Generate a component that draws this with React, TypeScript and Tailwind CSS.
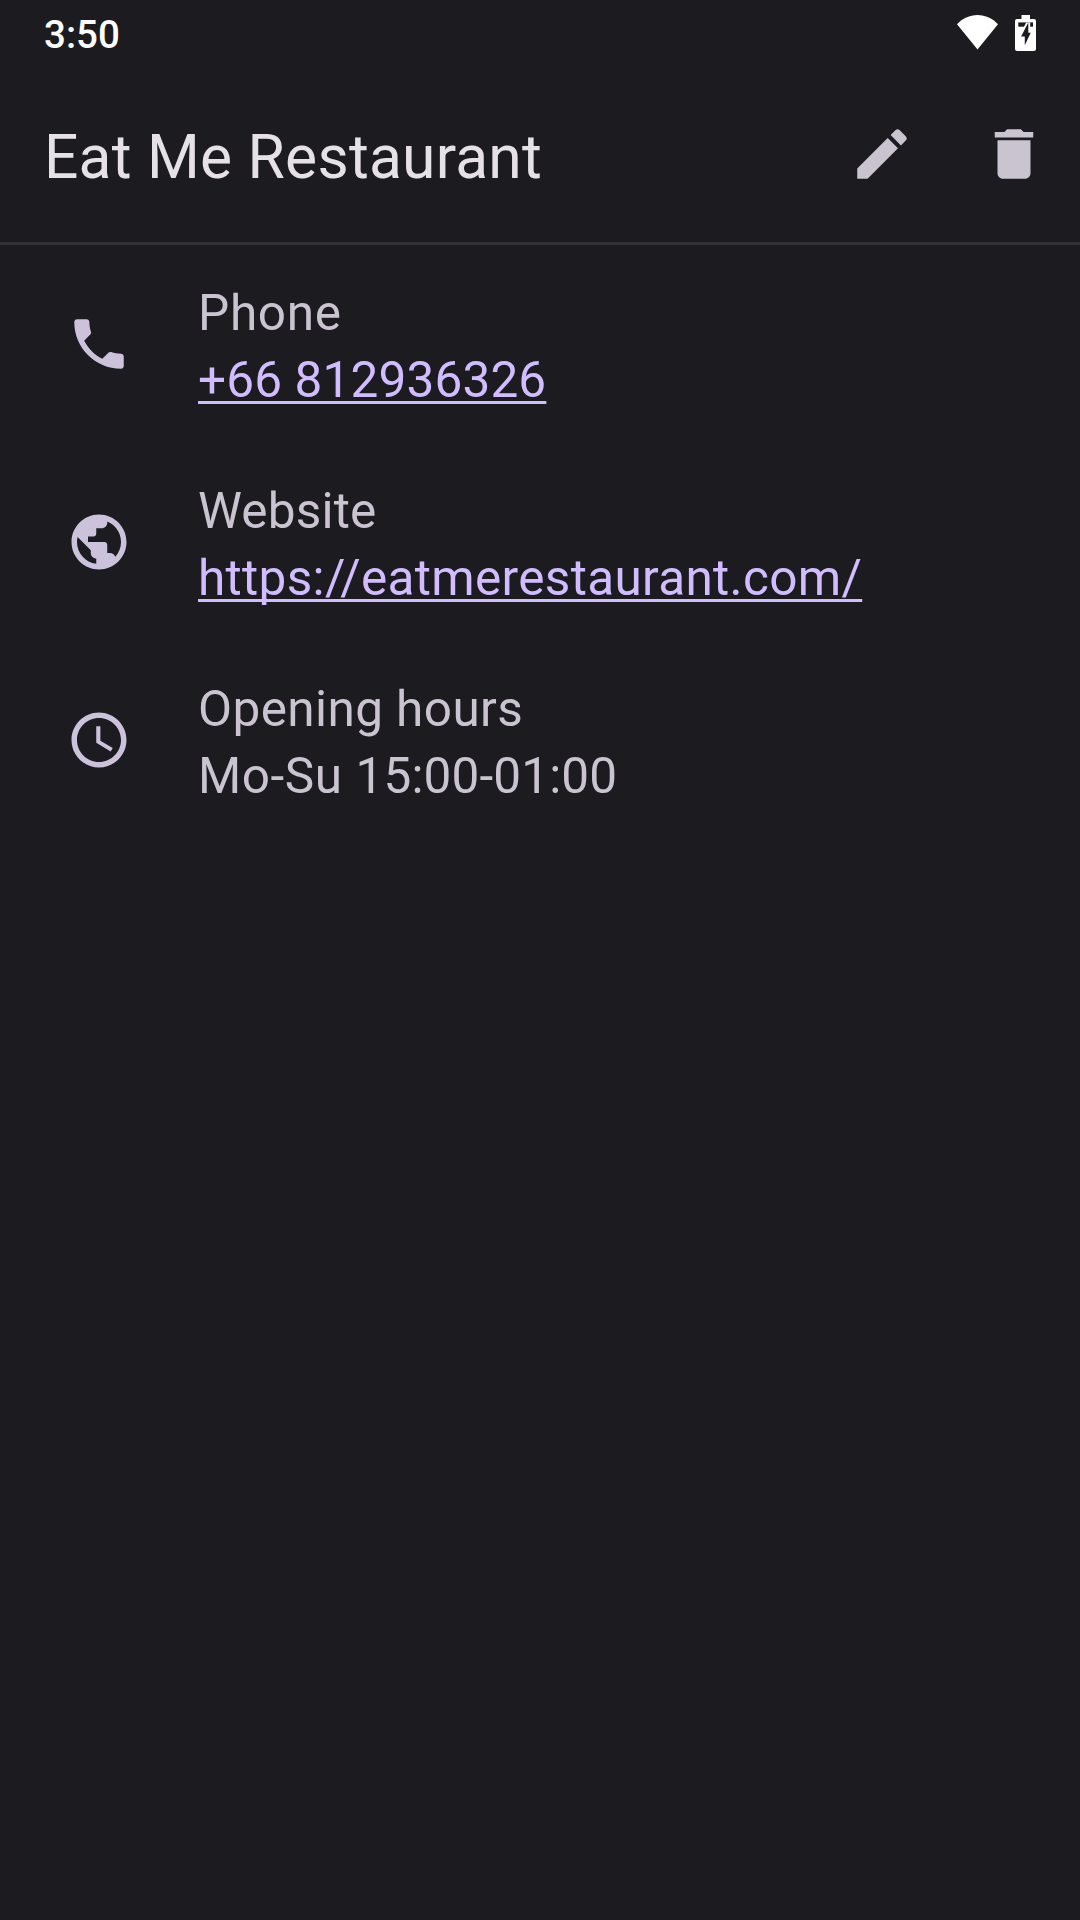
import type { ReactNode } from "react";

const PATHS = {
  edit: "M3 17.25V21h3.75L17.81 9.94l-3.75-3.75L3 17.25zM20.71 7.04c.39-.39.39-1.02 0-1.41l-2.34-2.34c-.39-.39-1.02-.39-1.41 0l-1.83 1.83 3.75 3.75 1.83-1.83z",
  trash: "M6 19c0 1.100.9 2 2 2h8c1.100 0 2-.9 2-2V7H6v12zM19 4h-3.500l-1-1h-5l-1 1H5v2h14V4z",
  phone: "M6.620 10.790c1.440 2.830 3.760 5.140 6.590 6.590l2.200-2.200c.27-.27.67-.36 1.020-.24 1.120.37 2.330.57 3.570.57.55 0 1 .45 1 1V20c0 .55-.45 1-1 1-9.390 0-17-7.610-17-17 0-.55.45-1 1-1h3.500c.55 0 1 .45 1 1 0 1.250.2 2.450.57 3.570.11.35.03.74-.25 1.020l-2.200 2.200z",
  globe: "M12 2C6.480 2 2 6.480 2 12s4.480 10 10 10 10-4.480 10-10S17.520 2 12 2zm-1 17.930c-3.950-.49-7-3.850-7-7.930 0-.62.08-1.210.21-1.790L9 15v1c0 1.100.9 2 2 2v1.930zm6.900-2.540c-.26-.81-1-1.390-1.900-1.390h-1v-3c0-.55-.45-1-1-1H8v-2h2c.55 0 1-.45 1-1V7h2c1.100 0 2-.9 2-2v-.41c2.930 1.190 5 4.060 5 7.410 0 2.080-.8 3.970-2.100 5.390z",
  clock: "M11.990 2C6.470 2 2 6.480 2 12s4.470 10 9.990 10C17.520 22 22 17.520 22 12S17.520 2 11.990 2zM12 20c-4.420 0-8-3.580-8-8s3.580-8 8-8 8 3.580 8 8-3.580 8-8 8zm.5-13H11v6l5.250 3.150.75-1.230-4.500-2.670z",
};

function Icon({ name }: { name: keyof typeof PATHS }) {
  return (
    <svg viewBox="0 0 24 24" className="size-[66px] shrink-0" fill="currentColor">
      <path d={PATHS[name]} />
    </svg>
  );
}

function Row({ icon, children }: { icon: keyof typeof PATHS; children: ReactNode }) {
  return (
    <li className="flex h-[198px] items-center gap-[66px] pl-[66px] text-[#ccc2dc]">
      <Icon name={icon} />
      <div className="pt-[5px] text-[49.5px] leading-[67px] whitespace-nowrap text-[#cac4d0]">{children}</div>
    </li>
  );
}

const linkClass =
  "text-[#d0bcff] underline decoration-[3px] underline-offset-[4px] [text-decoration-skip-ink:none]";

export default function App() {
  return (
    <main className="h-[1920px] w-[1080px] overflow-hidden bg-[#1c1b1f] font-[Roboto,sans-serif]">
      <div className="flex h-[66px] items-start justify-between pr-[44px] pl-[44px] text-white">
        <span className="pt-[12px] text-[38.5px] leading-[46px] font-medium">3:50</span>
        <div className="flex items-start gap-[17px] pt-[15px]">
          <svg viewBox="0 0 41 35" className="h-[35px] w-[41px]" fill="currentColor">
            <path d="M0 9.200C5.500 3.500 12.500 0 20.500 0S35.500 3.500 41 9.200L20.500 34.600z" />
          </svg>
          <svg viewBox="0 0 21 36" className="h-[36px] w-[21px]" fill="currentColor">
            <path d="M6.500 0h8.500v4h4q2 0 2 2v28q0 2-2 2H2q-2 0-2-2V6q0-2 2-2h4.500z" />
            <path d="M3.300 7.400h14.700v4.300H3.300z" fill="#1c1b1f" />
            <path d="M11.200 7.400L8.900 12h6.300V7.400z" />
            <path d="M13.300 7.400L6.100 21.600h3.700v8.700L15.700 17.800h-2.400z" fill="#1c1b1f" />
          </svg>
        </div>
      </div>
      <header className="flex h-[179px] items-start border-b-[3px] border-[#323136] pt-[55px] pr-[33px] pl-[44px] text-[#cac4d0]">
        <h1 className="flex-1 pt-px text-[60.5px] leading-[72px] tracking-[0.23px] whitespace-nowrap text-[#e6e1e5]">
          Eat Me Restaurant
        </h1>
        <div className="flex gap-[66px]">
          <button aria-label="Edit"><Icon name="edit" /></button>
          <button aria-label="Delete"><Icon name="trash" /></button>
        </div>
      </header>
      <ul>
        <Row icon="phone">
          <p className="tracking-[0.65px]">Phone</p>
          <p className="tracking-[0.15px]"><a className={linkClass}>+66 812936326</a></p>
        </Row>
        <Row icon="globe">
          <p className="tracking-[0.17px]">Website</p>
          <p className="tracking-[0.32px]"><a className={linkClass}>https://eatmerestaurant.com/</a></p>
        </Row>
        <Row icon="clock">
          <p className="tracking-[0.4px]">Opening hours</p>
          <p className="tracking-[0.13px]">
            <span className="tracking-[0.58px]">Mo-Su </span>15:00-01:00
          </p>
        </Row>
      </ul>
    </main>
  );
}
